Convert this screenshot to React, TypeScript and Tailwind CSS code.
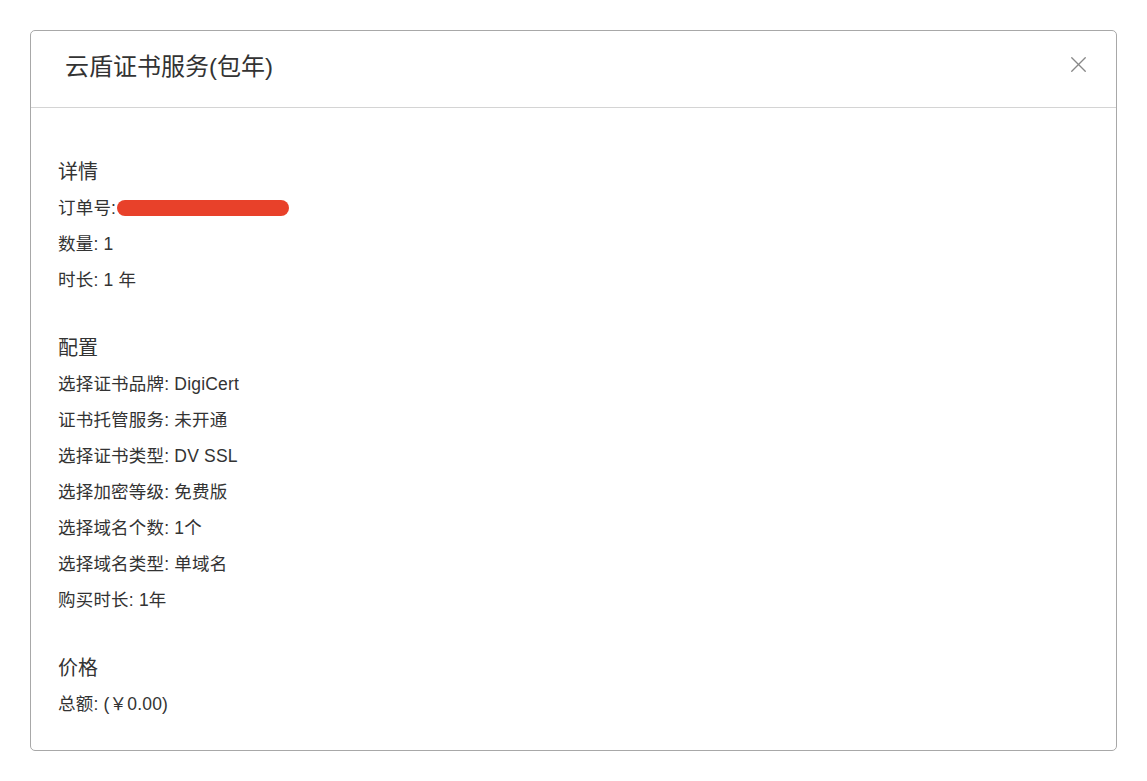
import { X } from "lucide-react";

const font = { fontFamily: '"Liberation Sans", "Noto Sans CJK SC", sans-serif' };

const sections: { title: string; rows: React.ReactNode[] }[] = [
  {
    title: "详情",
    rows: [
      <span className="flex items-center">
        订单号:
        <span className="ml-[1px] inline-block h-[16px] w-[172px] rounded-full bg-[#e8412a]" />
      </span>,
      "数量: 1",
      "时长: 1 年",
    ],
  },
  {
    title: "配置",
    rows: [
      "选择证书品牌: DigiCert",
      "证书托管服务: 未开通",
      "选择证书类型: DV SSL",
      "选择加密等级: 免费版",
      "选择域名个数: 1个",
      "选择域名类型: 单域名",
      "购买时长: 1年",
    ],
  },
  {
    title: "价格",
    rows: ["总额: (￥0.00)"],
  },
];

export default function App() {
  return (
    <div className="min-h-[781px] bg-white p-[30px] text-[#333]" style={font}>
      <div className="w-[1087px] rounded-[5px] border border-[#a8a8a8] bg-white">
        <div className="flex h-[77px] items-center justify-between border-b border-[#d4d4d4] pl-[34px] pr-[24px]">
          <h2 className="-mt-[4px] text-[24px] text-[#333]">云盾证书服务(包年)</h2>
          <button className="-mt-[9px] text-[#888]">
            <X size={27} strokeWidth={1.2} />
          </button>
        </div>
        <div className="flex flex-col gap-[32px] px-[27px] pb-[28px] pt-[46px]">
          {sections.map((s) => (
            <div key={s.title}>
              <div className="text-[20px] leading-[36px]">{s.title}</div>
              {s.rows.map((r, i) => (
                <div key={i} className="text-[17.5px] leading-[36px] tracking-[0.2px]">
                  {r}
                </div>
              ))}
            </div>
          ))}
        </div>
      </div>
    </div>
  );
}
